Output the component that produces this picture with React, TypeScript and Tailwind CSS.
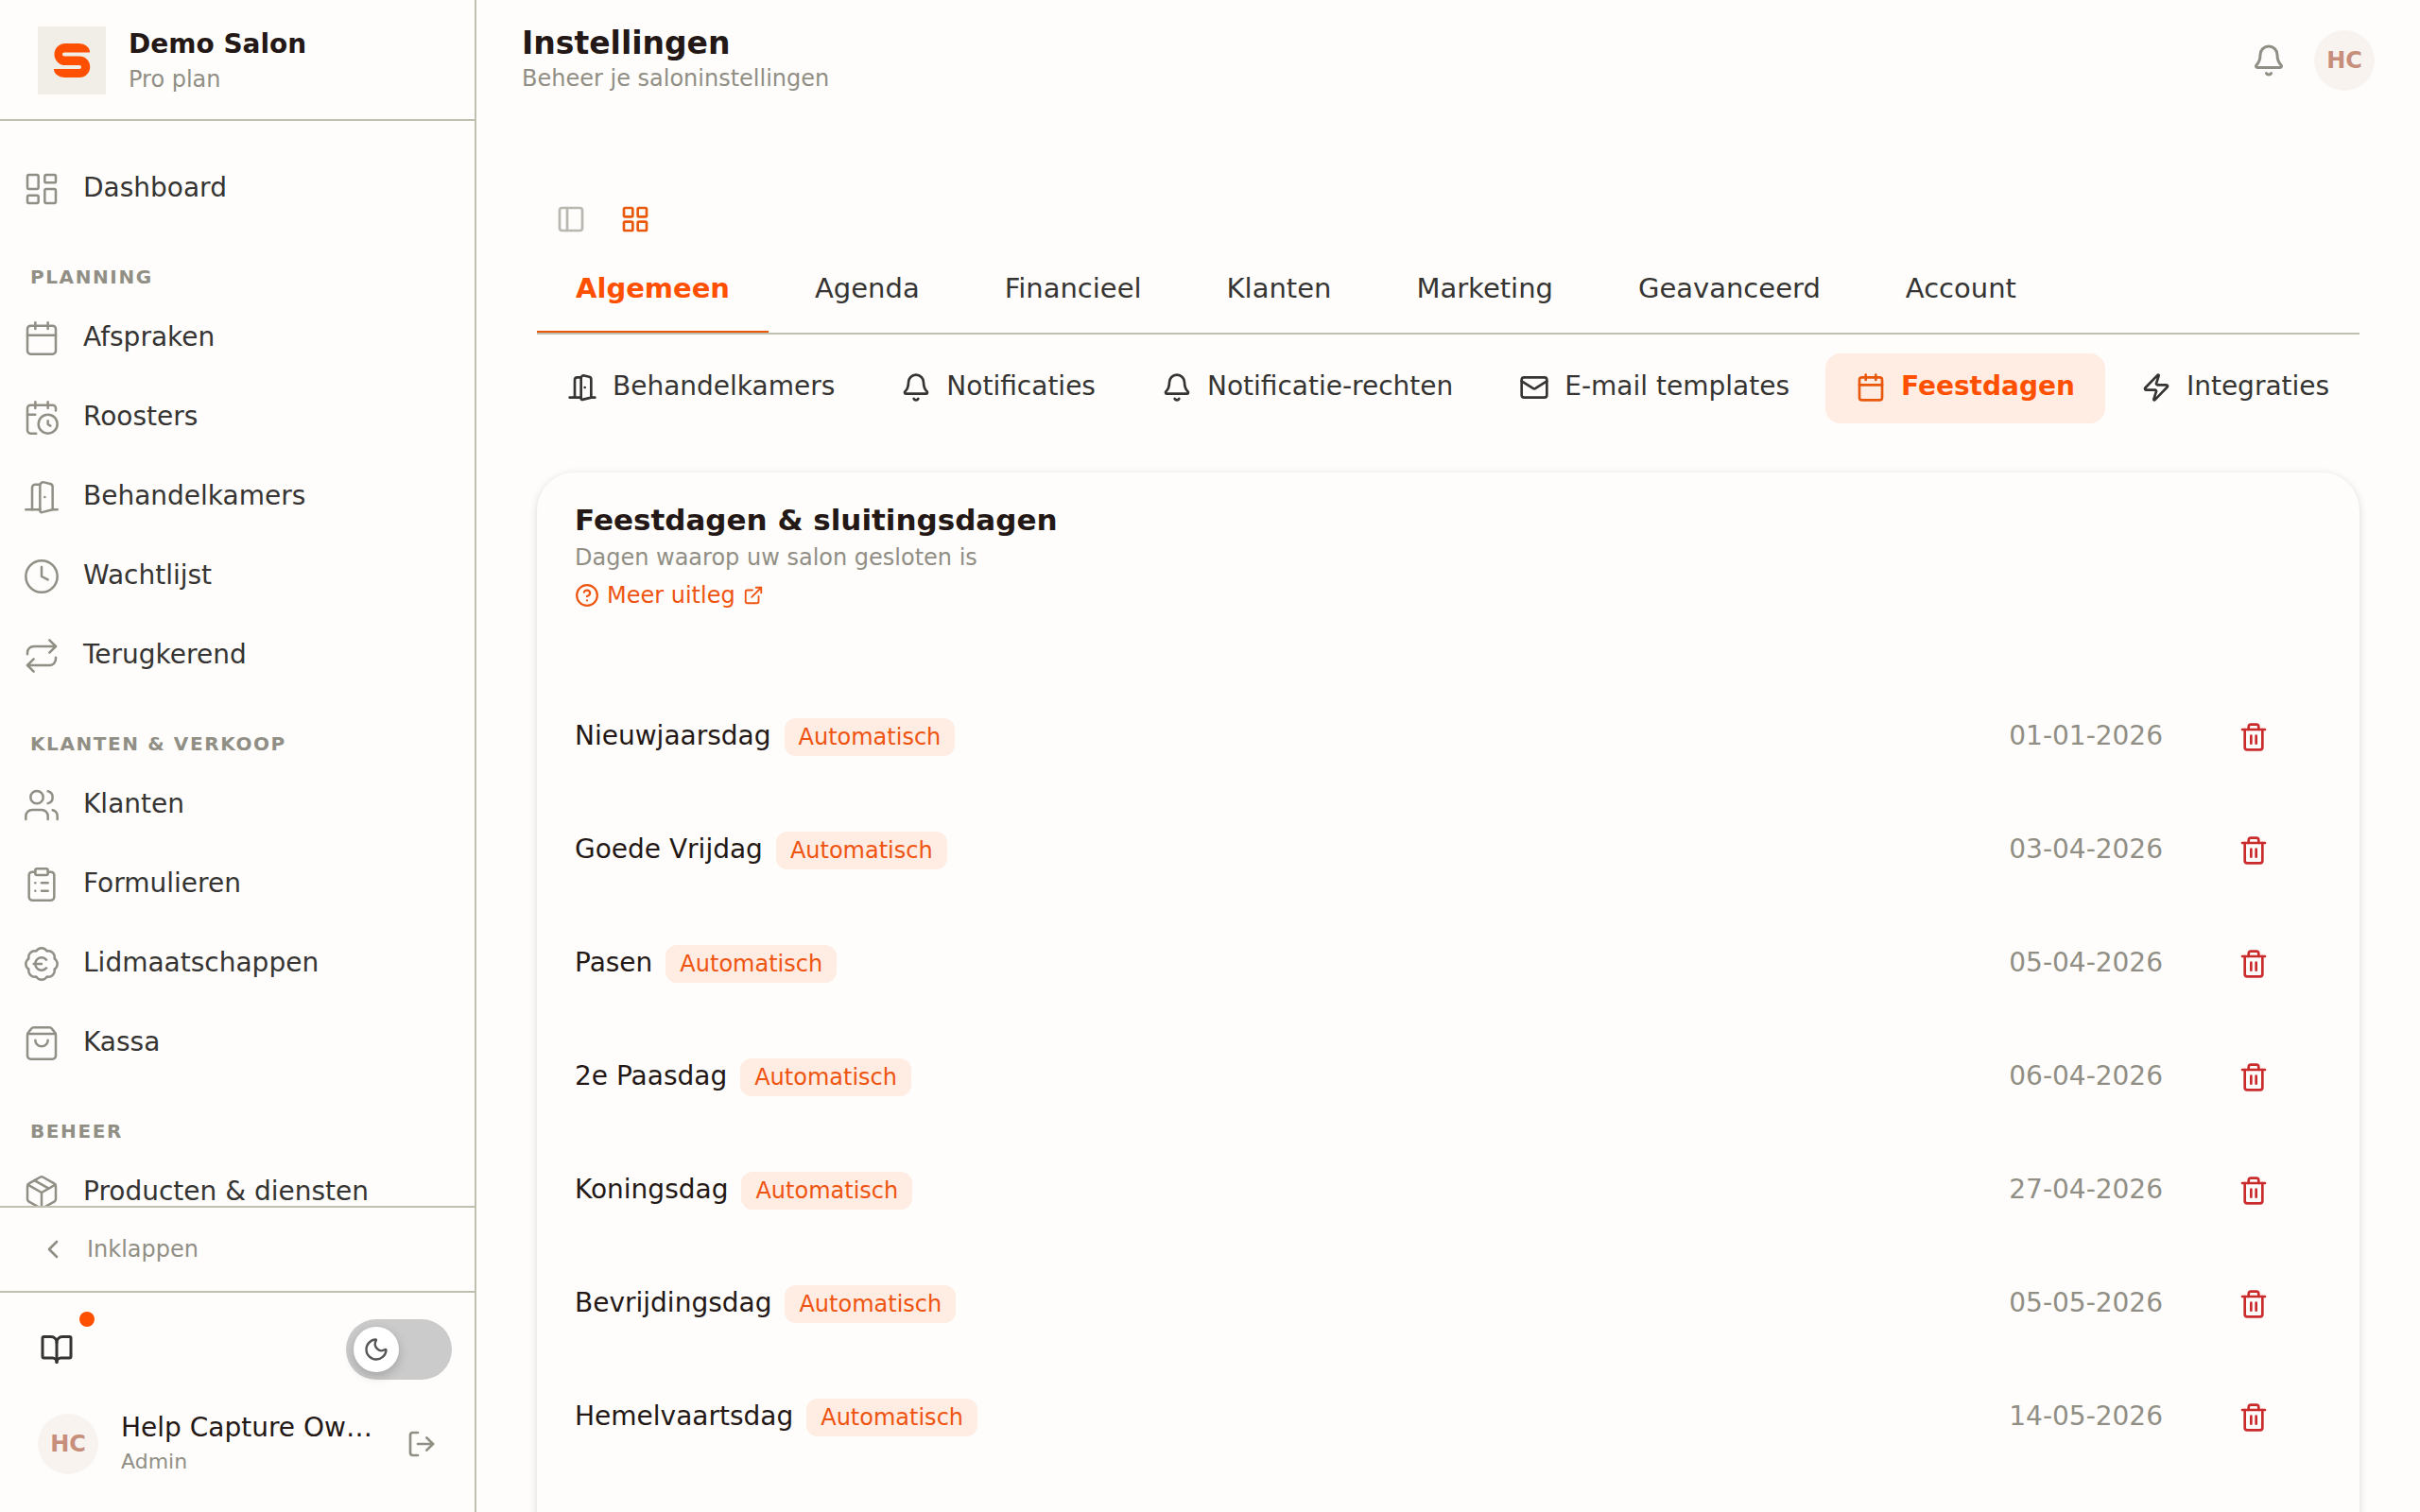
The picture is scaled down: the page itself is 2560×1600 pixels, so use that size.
import {
  Bell,
  BookOpen,
  Calendar,
  CalendarClock,
  ChevronLeft,
  CircleQuestionMark,
  Clock,
  ClipboardList,
  DoorOpen,
  ExternalLink,
  LayoutDashboard,
  LayoutGrid,
  LogOut,
  Mail,
  Moon,
  Package,
  PanelLeft,
  Repeat,
  ShoppingBag,
  Trash2,
  Users,
  Zap,
  type LucideIcon,
} from "lucide-react"
import clsx from "clsx"

type NavItem = { label: string; icon: LucideIcon | typeof EuroBadge }
type NavSection = { title?: string; items: NavItem[] }

const EuroBadge = ({ className }: { className?: string; strokeWidth?: number }) => (
  <svg
    className={className}
    viewBox="0 0 24 24"
    fill="none"
    stroke="currentColor"
    strokeWidth={1.5}
    strokeLinecap="round"
    strokeLinejoin="round"
    aria-hidden="true"
  >
    <path d="M3.85 8.62a4 4 0 0 1 4.78-4.77 4 4 0 0 1 6.74 0 4 4 0 0 1 4.78 4.78 4 4 0 0 1 0 6.74 4 4 0 0 1-4.77 4.78 4 4 0 0 1-6.75 0 4 4 0 0 1-4.78-4.77 4 4 0 0 1 0-6.76Z" />
    <path d="M7 12h5" />
    <path d="M15 9.4a4 4 0 1 0 0 5.2" />
  </svg>
)

const sections: NavSection[] = [
  { items: [{ label: "Dashboard", icon: LayoutDashboard }] },
  {
    title: "Planning",
    items: [
      { label: "Afspraken", icon: Calendar },
      { label: "Roosters", icon: CalendarClock },
      { label: "Behandelkamers", icon: DoorOpen },
      { label: "Wachtlijst", icon: Clock },
      { label: "Terugkerend", icon: Repeat },
    ],
  },
  {
    title: "Klanten & verkoop",
    items: [
      { label: "Klanten", icon: Users },
      { label: "Formulieren", icon: ClipboardList },
      { label: "Lidmaatschappen", icon: EuroBadge },
      { label: "Kassa", icon: ShoppingBag },
    ],
  },
  { title: "Beheer", items: [{ label: "Producten & diensten", icon: Package }] },
]

const tabs = [
  "Algemeen",
  "Agenda",
  "Financieel",
  "Klanten",
  "Marketing",
  "Geavanceerd",
  "Account",
]

const subTabs = [
  { label: "Behandelkamers", icon: DoorOpen },
  { label: "Notificaties", icon: Bell },
  { label: "Notificatie-rechten", icon: Bell },
  { label: "E-mail templates", icon: Mail },
  { label: "Feestdagen", icon: Calendar },
  { label: "Integraties", icon: Zap },
]

const holidays = [
  { name: "Nieuwjaarsdag", date: "01-01-2026" },
  { name: "Goede Vrijdag", date: "03-04-2026" },
  { name: "Pasen", date: "05-04-2026" },
  { name: "2e Paasdag", date: "06-04-2026" },
  { name: "Koningsdag", date: "27-04-2026" },
  { name: "Bevrijdingsdag", date: "05-05-2026" },
  { name: "Hemelvaartsdag", date: "14-05-2026" },
]

const Logo = () => (
  <svg className="size-[72px] shrink-0" viewBox="0 0 72 72" aria-hidden="true">
    <rect width="72" height="72" fill="#f0eee6" />
    <path
      fill="#ff4f00"
      d="M29 18H44A11 9.500 0 0 1 55 27.500H28A2 2 0 0 0 28 31.500H44A11 11 0 0 1 44 54H28A11 9 0 0 1 17 45H44A2 2 0 0 0 44 41H29A11.500 11.500 0 0 1 29 18Z"
    />
  </svg>
)

const Avatar = () => (
  <span className="flex size-16 shrink-0 items-center justify-center rounded-full bg-[#f8f3ef] text-2xl font-bold text-[#c78f7b]">
    HC
  </span>
)

const Sidebar = () => (
  <aside className="flex w-[504px] shrink-0 flex-col border-r-2 border-[#c1c0b0]">
    <div className="flex h-32 shrink-0 items-center gap-6 border-b-2 border-[#c1c0b0] px-10 pt-[2px]">
      <Logo />
      <div className="pt-[2px]">
        <p className="text-[28px] leading-[38px] font-bold text-[#231815]">Demo Salon</p>
        <p className="text-2xl leading-9 text-[#918f85]">Pro plan</p>
      </div>
    </div>

    <nav className="min-h-0 flex-1 overflow-y-auto px-2 pt-8 [scrollbar-width:none]">
      {sections.map(({ title, items }) => (
        <div key={items[0].label}>
          {title && (
            <h2 className="px-6 pt-[38px] pb-[10px] text-[20px] leading-[30px] font-bold tracking-[0.08em] text-[#918f85] uppercase">
              {title}
            </h2>
          )}
          <ul className="flex flex-col gap-1">
            {items.map(({ label, icon: Icon }) => (
              <li key={label}>
                <a href="#" className="flex h-20 items-center gap-6 px-4 text-[28px] text-[#353432]">
                  <Icon className="size-10 text-[#918f85]" strokeWidth={1.5} />
                  <span className="pb-[2px]">{label}</span>
                </a>
              </li>
            ))}
          </ul>
        </div>
      ))}
    </nav>

    <button
      type="button"
      className="flex h-[92px] shrink-0 items-center gap-5 border-y-2 border-[#c1c0b0] px-10 text-2xl text-[#918f85]"
    >
      <ChevronLeft className="size-8" />
      Inklappen
    </button>

    <div className="shrink-0 pt-4 pr-6 pb-9 pl-4">
      <div className="flex items-center justify-between">
        <button
          type="button"
          aria-label="Handleiding"
          className="relative flex size-[88px] items-center justify-center text-[#353432]"
        >
          <BookOpen className="size-9" />
          <span className="absolute top-1 right-1 size-4 rounded-full bg-[#ff4f00]" />
        </button>
        <button
          type="button"
          role="switch"
          aria-checked="false"
          aria-label="Donkere modus"
          className="h-16 w-28 rounded-full bg-[#cbcbcb] p-2"
        >
          <span className="flex size-12 items-center justify-center rounded-full bg-white shadow-[0_4px_12px_rgba(0,0,0,0.2)]">
            <Moon className="size-7 text-[#555555]" />
          </span>
        </button>
      </div>

      <div className="mt-5 flex items-center pl-6">
        <Avatar />
        <div className="min-w-0 flex-1 pl-6">
          <p className="truncate text-[28px] leading-[38px] text-[#231815]">Help Capture Ow…</p>
          <p className="text-[22px] leading-[34px] text-[#918f85]">Admin</p>
        </div>
        <button type="button" aria-label="Uitloggen" className="px-4 text-[#918f85]">
          <LogOut className="size-8" />
        </button>
      </div>
    </div>
  </aside>
)

const TopBar = () => (
  <header className="flex h-32 shrink-0 items-center justify-between px-12">
    <div className="pt-[2px]">
      <h1 className="text-[33px] leading-9 font-bold text-[#231815]">Instellingen</h1>
      <p className="text-2xl leading-[38px] text-[#918f85]">Beheer je saloninstellingen</p>
    </div>
    <div className="flex items-center gap-[30px]">
      <button type="button" aria-label="Meldingen" className="text-[#918f85]">
        <Bell className="size-9" />
      </button>
      <Avatar />
    </div>
  </header>
)

const HolidayCard = () => (
  <section className="mt-[52px] rounded-[40px] bg-[#fefdfb] px-10 pt-[27px] pb-24 shadow-[0_2px_8px_rgba(0,0,0,0.15)]">
    <h2 className="text-[31px] leading-[46px] font-bold text-[#231815]">
      Feestdagen &amp; sluitingsdagen
    </h2>
    <p className="text-2xl leading-[34px] text-[#918f85]">Dagen waarop uw salon gesloten is</p>
    <a href="#" className="mt-[5px] inline-flex items-center gap-2 text-2xl leading-9 text-[#ee5410]">
      <CircleQuestionMark className="size-[26px]" />
      Meer uitleg
      <ExternalLink className="size-[22px]" />
    </a>

    <table className="mt-[70px] w-full text-[28px]">
      <tbody>
        {holidays.map(({ name, date }) => (
          <tr key={date} className="h-[120px]">
            <td>
              <div className="flex items-center gap-[14px] text-[#231815]">
                <span className="pb-[2px]">{name}</span>
                <span className="rounded-xl bg-[#ffece3] px-[15px] text-2xl leading-10 text-[#ee5410]">
                  Automatisch
                </span>
              </div>
            </td>
            <td className="pb-[2px] text-right text-[#918f85]">{date}</td>
            <td className="w-[168px] pr-7">
              <button
                type="button"
                aria-label={`Verwijder ${name}`}
                className="ml-auto flex size-[88px] items-center justify-center text-[#c92a2a]"
              >
                <Trash2 className="size-8" />
              </button>
            </td>
          </tr>
        ))}
      </tbody>
    </table>
  </section>
)

export default function App() {
  return (
    <div className="flex h-screen overflow-hidden bg-[#fefdfb] font-['DejaVu_Sans',sans-serif]">
      <Sidebar />
      <div className="flex min-w-0 flex-1 flex-col">
        <TopBar />
        <main className="min-h-0 flex-1 overflow-y-auto px-16 pt-[72px] [scrollbar-width:none]">
          <div className="flex gap-1 px-1">
            <button
              type="button"
              aria-label="Zijbalkweergave"
              className="flex size-16 items-center justify-center text-[#b9b8b0]"
            >
              <PanelLeft className="size-8" />
            </button>
            <button
              type="button"
              aria-label="Tabbladweergave"
              className="flex size-16 items-center justify-center text-[#e8590c]"
            >
              <LayoutGrid className="size-8" />
            </button>
          </div>

          <nav className="flex gap-2 border-b-2 border-[#c1c0b0] text-[29px]">
            {tabs.map((tab, i) => (
              <button
                key={tab}
                type="button"
                className={clsx(
                  "h-[88px] border-b-2 px-[41px] pb-[2px]",
                  i === 0
                    ? "border-[#e8590c] font-bold text-[#ff4f00]"
                    : "border-transparent text-[#353432]"
                )}
              >
                {tab}
              </button>
            ))}
          </nav>

          <nav className="mt-5 flex gap-[6px] text-[28px] whitespace-nowrap">
            {subTabs.map(({ label, icon: Icon }) => {
              const active = label === "Feestdagen"
              return (
                <button
                  key={label}
                  type="button"
                  className={clsx(
                    "flex h-[74px] items-center gap-4 rounded-2xl px-8 pb-[2px]",
                    active ? "bg-[#ffece3] font-bold text-[#ff4f00]" : "text-[#353432]"
                  )}
                >
                  <Icon className={clsx("size-8", active && "text-[#e8590c]")} />
                  <span className="pb-[2px]">{label}</span>
                </button>
              )
            })}
          </nav>

          <HolidayCard />
        </main>
      </div>
    </div>
  )
}
